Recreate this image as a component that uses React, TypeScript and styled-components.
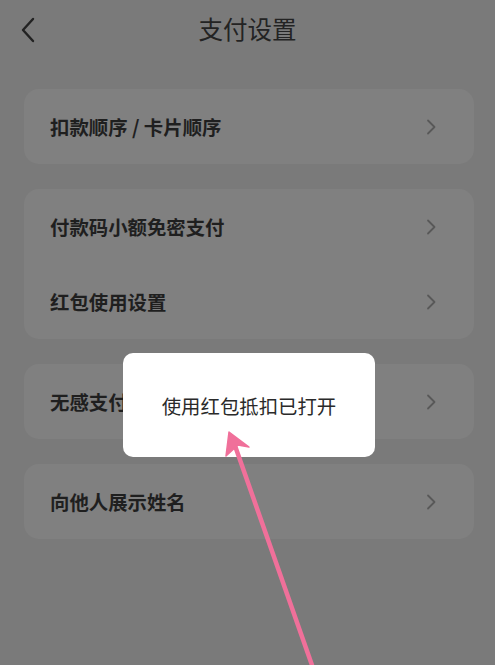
import React from "react";
import styled, { createGlobalStyle } from "styled-components";

const Global = createGlobalStyle`
  html, body { margin: 0; padding: 0; background: #7a7a7a; }
  body { font-family: "Noto Sans CJK SC", "Noto Sans", sans-serif; }
`;

const Page = styled.div`
  position: relative;
  width: 495px;
  height: 665px;
  overflow: hidden;
  background: #7a7a7a;
`;

const Header = styled.div`
  position: relative;
  height: 60px;
  display: flex;
  align-items: center;
  justify-content: center;
  padding-bottom: 2px;
  box-sizing: border-box;
`;

const BackBtn = styled.div`
  position: absolute;
  left: 18px;
  top: 15px;
  width: 20px;
  height: 30px;
  display: flex;
  align-items: center;
  justify-content: center;
`;

const Title = styled.div`
  font-size: 24.5px;
  color: #232323;
  font-weight: 400;
  line-height: 1;
`;

const List = styled.div`
  display: flex;
  flex-direction: column;
  gap: 25px;
  margin: 29px 0 0 24px;
  width: 450px;
`;

const Card = styled.div`
  background: #808080;
  border-radius: 15px;
  display: flex;
  flex-direction: column;
`;

const Row = styled.div`
  height: 75px;
  display: flex;
  align-items: center;
  justify-content: space-between;
  padding: 0 38px 0 26px;
`;

const Label = styled.span`
  font-size: 19.4px;
  font-weight: 700;
  color: #1f1f1f;
`;

const Toast = styled.div`
  position: absolute;
  left: 123px;
  top: 353px;
  width: 252px;
  height: 104px;
  background: #ffffff;
  border-radius: 10px;
  display: flex;
  align-items: center;
  justify-content: center;
  font-size: 19.4px;
  color: #2a2a2a;
  padding-top: 1px;
  box-sizing: border-box;
`;

const Annotation = styled.svg`
  position: absolute;
  left: 0;
  top: 0;
  pointer-events: none;
`;

const Chevron = () => (
  <svg width="10" height="16" viewBox="0 0 10 16">
    <path d="M2 1.5 L8.5 8 L2 14.5" fill="none" stroke="#585858" strokeWidth="1.8" strokeLinecap="round" strokeLinejoin="round" />
  </svg>
);

const groups: string[][] = [
  ["扣款顺序 / 卡片顺序"],
  ["付款码小额免密支付", "红包使用设置"],
  ["无感支付"],
  ["向他人展示姓名"],
];

export default function App() {
  return (
    <Page>
      <Global />
      <Header>
        <BackBtn>
          <svg width="14" height="26" viewBox="0 0 14 26">
            <path d="M12 2 L2 13 L12 24" fill="none" stroke="#222" strokeWidth="2.4" strokeLinecap="round" strokeLinejoin="round" />
          </svg>
        </BackBtn>
        <Title>支付设置</Title>
      </Header>
      <List>
        {groups.map((g, i) => (
          <Card key={i}>
            {g.map((t) => (
              <Row key={t}>
                <Label>{t}</Label>
                <Chevron />
              </Row>
            ))}
          </Card>
        ))}
      </List>
      <Toast>使用红包抵扣已打开</Toast>
      <Annotation width="495" height="665" viewBox="0 0 495 665">
        <line x1="313" y1="668" x2="233" y2="440" stroke="#f0709a" strokeWidth="4.5" strokeLinecap="round" />
        <path d="M229 432 L249 447 L238 445 L226 456 Z" fill="#f0709a" stroke="#f0709a" strokeWidth="1.5" strokeLinejoin="round" />
      </Annotation>
    </Page>
  );
}
